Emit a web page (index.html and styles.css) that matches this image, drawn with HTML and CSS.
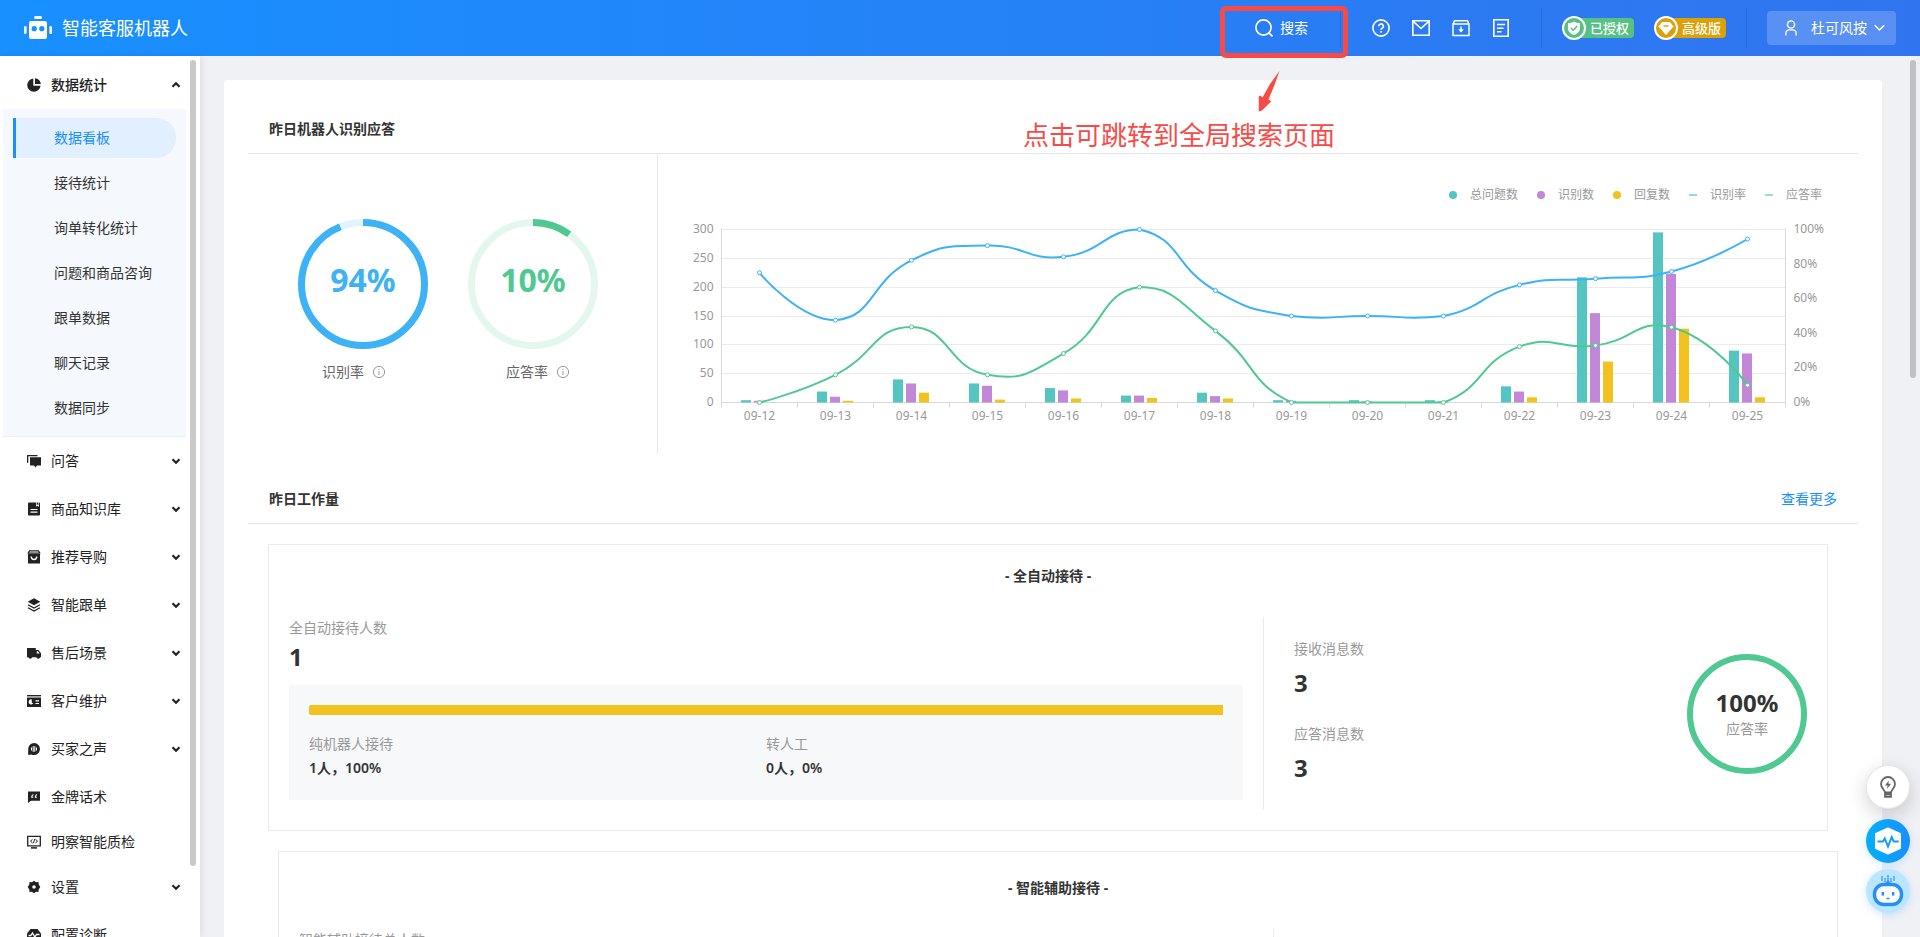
FILE: index.html
```html
<!DOCTYPE html>
<html lang="zh-CN">
<head>
<meta charset="utf-8">
<meta name="viewport" content="width=device-width, initial-scale=1">
<title>智能客服机器人</title>
<link rel="stylesheet" href="styles.css">
</head>
<body>
<svg class="sprite" aria-hidden="true">
  <symbol id="chevron" viewBox="0 0 10 10"><path d="M1.5 3.2 5 6.7l3.5-3.5" fill="none" stroke="currentColor" stroke-width="2.2"/></symbol>
  <symbol id="info" viewBox="0 0 14 14"><circle cx="7" cy="7" r="5.6" fill="none" stroke="currentColor"/><path d="M7 6v4M7 3.8v1.2" stroke="currentColor" fill="none"/></symbol>
</svg>

<header class="topbar">
  <div class="brand">
    <svg class="brand-logo" viewBox="0 0 28 24" fill="#fff"><rect x="10" y="0" width="8" height="3" rx="1.5"/><rect x="0" y="10" width="2.6" height="8" rx="1.3"/><rect x="25.4" y="10" width="2.6" height="8" rx="1.3"/><path fill-rule="evenodd" d="M7 5h14a2 2 0 0 1 2 2v14a2 2 0 0 1-2 2H7a2 2 0 0 1-2-2V7a2 2 0 0 1 2-2zm3.2 5.1a2.6 2.6 0 1 0 0 5.200 2.600 2.600 0 0 0 0-5.200zm7.600 0a2.600 2.600 0 1 0 0 5.200 2.600 2.600 0 0 0 0-5.200z"/></svg>
    <h1 class="brand-name">智能客服机器人</h1>
  </div>
  <div class="tools">
    <button class="search" type="button">
      <svg class="icon-18" viewBox="0 0 18 18" fill="none" stroke="currentColor" stroke-width="1.600"><circle cx="8.500" cy="8.500" r="7.600"/><path d="m13.500 13.500 4 4"/></svg>
      <span>搜索</span>
    </button>
    <span class="divider"></span>
    <div class="icon-row">
      <button class="icon-button" type="button" aria-label="帮助"><svg class="icon-18" viewBox="0 0 18 18" fill="none" stroke="currentColor" stroke-width="1.600"><circle cx="9" cy="9" r="8.100"/><path d="M6.700 7.200a2.300 2.300 0 1 1 3.400 2c-.8.400-1.100.8-1.100 1.600M9 12v1.700"/></svg></button>
      <button class="icon-button" type="button" aria-label="消息"><svg class="icon-18" viewBox="0 0 18 18" fill="none" stroke="currentColor" stroke-width="1.600"><path d="M.8 1.800h16.400v14.400H.8zM1 2.200l8 7.300 8-7.300"/></svg></button>
      <button class="icon-button" type="button" aria-label="下载"><svg class="icon-18" viewBox="0 0 18 18" fill="none" stroke="currentColor" stroke-width="1.500"><path d="M1 5h16v11.500H1zM1.200 5l1.300-3.300h13L16.800 5M9 7.500v5"/><path d="m6.200 10.200 2.800 3.300 2.800-3.300z" fill="currentColor" stroke="none"/></svg></button>
      <button class="icon-button" type="button" aria-label="文档"><svg class="icon-18" viewBox="0 0 18 18" fill="none" stroke="currentColor" stroke-width="1.600"><path d="M1.800.8h14.400v16.400H1.800zM5 5.500h8M5 9.200h6.500M5 12.800h4.500"/></svg></button>
    </div>
    <span class="divider"></span>
    <div class="badges">
      <span class="badge badge-green">
        <svg class="badge-icon" viewBox="0 0 24 24"><circle cx="12" cy="12" r="11" fill="#57c083" stroke="#fff" stroke-width="2"/><path d="M12 5.500c2 1.300 3.700 1.500 6 1.500v5c0 3.600-2.400 5.500-6 7-3.600-1.500-6-3.400-6-7V7c2.300 0 4-.2 6-1.500z" fill="#fff"/><path d="m9 12 2.300 2.200L15.200 10" fill="none" stroke="#57c083" stroke-width="1.500"/></svg>
        <span class="badge-text">已授权</span>
      </span>
      <span class="badge badge-gold">
        <svg class="badge-icon" viewBox="0 0 24 24"><circle cx="12" cy="12" r="11" fill="#dba106" stroke="#fff" stroke-width="2"/><path d="M8 6.500h8l3 4-7 8-7-8z" fill="#fff" stroke="#fff" stroke-linejoin="round"/><path d="M9.500 10h5" stroke="#dba106" stroke-width="1.400"/></svg>
        <span class="badge-text">高级版</span>
      </span>
    </div>
    <span class="divider"></span>
    <button class="user" type="button">
      <svg class="user-icon" viewBox="0 0 12 16" fill="none" stroke="currentColor" stroke-width="1.300"><circle cx="6" cy="4.500" r="3.600"/><path d="M.9 15.500v-2.200a3.500 3.500 0 0 1 3.500-3.500h3.200a3.500 3.500 0 0 1 3.500 3.500v2.200"/></svg>
      <span class="user-name">杜可风按</span>
      <svg class="user-caret" viewBox="0 0 11 8" fill="none" stroke="currentColor" stroke-width="1.500"><path d="m.8 1.200 4.700 4.800 4.700-4.800"/></svg>
    </button>
  </div>
</header>

<div class="shell">
  <nav class="sidebar">
    <button class="group group-open" type="button" aria-expanded="true">
      <svg class="group-icon" viewBox="0 0 14 14"><path d="M6.300.4v7.300h7.300A6.700 6.700 0 1 1 6.300.4z" fill="currentColor"/><path d="M8 .2A6.200 6.200 0 0 1 13.800 6H8z" fill="currentColor"/></svg>
      <span class="group-name">数据统计</span><svg class="chevron chevron-up"><use href="#chevron"/></svg>
    </button>
    <div class="submenu">
      <a class="sub sub-active" href="#board">数据看板</a>
      <a class="sub" href="#reception">接待统计</a>
      <a class="sub" href="#convert">询单转化统计</a>
      <a class="sub" href="#questions">问题和商品咨询</a>
      <a class="sub" href="#follow">跟单数据</a>
      <a class="sub" href="#chat">聊天记录</a>
      <a class="sub" href="#sync">数据同步</a>
    </div>
    <button class="group" type="button"><svg class="group-icon" viewBox="0 0 14 14" fill="currentColor"><path d="M0 1h10.500v1.300H1.300v6.500H0z"/><path d="M3 3.200h11v8.300h-4l-1.500 2-1.500-2H3z"/></svg><span class="group-name">问答</span><svg class="chevron"><use href="#chevron"/></svg></button>
    <button class="group" type="button"><svg class="group-icon" viewBox="0 0 14 14" fill="currentColor"><path fill-rule="evenodd" d="M2 .5h7v4.300l1.500-1 1.500 1V.5h0a1 1 0 0 1 1 1v11a1 1 0 0 1-1 1H2a1 1 0 0 1-1-1v-11a1 1 0 0 1 1-1zM3.500 7v1.100h7V7zm0 2.600v1.100h7V9.600z"/><path d="M9.700.5h1.700v2.600l-.85-.6-.85.6z"/></svg><span class="group-name">商品知识库</span><svg class="chevron"><use href="#chevron"/></svg></button>
    <button class="group" type="button"><svg class="group-icon" viewBox="0 0 14 14" fill="none" stroke="currentColor"><path d="M2.500.9h9L12.700 3H1.300z" stroke-width="1.200"/><path d="M1 3.500h12v10H1z" fill="currentColor" stroke="none"/><path d="M4.200 6.500c.2 4 5.400 4 5.600 0" stroke="#fff" stroke-width="1.400"/></svg><span class="group-name">推荐导购</span><svg class="chevron"><use href="#chevron"/></svg></button>
    <button class="group" type="button"><svg class="group-icon" viewBox="0 0 14 14" fill="none" stroke="currentColor" stroke-width="1.300"><path d="m7 .3 6.300 3.500L7 7.300.7 3.800z" fill="currentColor" stroke="none"/><path d="m1 6.700 6 3.300 6-3.300M1 9.800l6 3.300 6-3.300"/></svg><span class="group-name">智能跟单</span><svg class="chevron"><use href="#chevron"/></svg></button>
    <button class="group" type="button"><svg class="group-icon" viewBox="0 0 14 14" fill="currentColor"><path fill-rule="evenodd" d="M0 2h8.800v2h2.700L14 7.200v4h-1a1.800 1.800 0 0 1-3.500 0H5a1.800 1.800 0 0 1-3.500 0H0zm9.800 3.200v2.400h2.800L11 5.200z"/><circle cx="3.200" cy="11.300" r="1.300"/><circle cx="11.200" cy="11.300" r="1.300"/></svg><span class="group-name">售后场景</span><svg class="chevron"><use href="#chevron"/></svg></button>
    <button class="group" type="button"><svg class="group-icon" viewBox="0 0 14 14" fill="currentColor"><path d="M0 1h14v1.400H0z"/><path fill-rule="evenodd" d="M0 3.400h14V13H0zm4.800 2.100a2.500 2.500 0 1 0 1.500 3.600H4.800zm3.700.8v1.200H12V6.300zm0 2.600v1.200H12V8.900z"/></svg><span class="group-name">客户维护</span><svg class="chevron"><use href="#chevron"/></svg></button>
    <button class="group" type="button"><svg class="group-icon" viewBox="0 0 14 14"><path d="M7 1a6 6 0 1 1-2.700 11.400L1.200 13V7A6 6 0 0 1 7 1z" fill="currentColor"/><path d="M4.500 5.500v3M6.200 4.200v5.600M7.800 4.200v5.600M9.500 5.500v3" stroke="#fff"/></svg><span class="group-name">买家之声</span><svg class="chevron"><use href="#chevron"/></svg></button>
    <a class="group group-leaf" href="#gold"><svg class="group-icon" viewBox="0 0 14 14"><path d="M1 1.500h12v9.300H4L1 13z" fill="currentColor"/><path d="M6.400 4.500c-1.300.4-1.700 1.200-1.700 2.800h1.600M10 4.500c-1.300.4-1.700 1.200-1.700 2.800h1.600" fill="none" stroke="#fff" stroke-width="1.100"/></svg><span class="group-name">金牌话术</span></a>
    <a class="group group-leaf" href="#quality"><svg class="group-icon" viewBox="0 0 14 14" fill="none" stroke="currentColor"><path d="M.7 1.400h12.600v9.400H.7z" stroke-width="1.300"/><path d="M4 12.900h6" stroke-width="1.500"/><path d="m5.500 4.300-2 1.800 2 1.800M8.500 4.300l2 1.800-2 1.800M7.800 4 6.300 8.200"/></svg><span class="group-name">明察智能质检</span></a>
    <button class="group" type="button"><svg class="group-icon" viewBox="0 0 14 14" fill="currentColor"><path fill-rule="evenodd" d="M7 .8 9 2.300l2.500-.2.200 2.500L13.300 7l-1.600 2.400-.2 2.500-2.500-.2-2 1.500-2-1.500-2.500.2-.2-2.500L.7 7l1.600-2.400.2-2.500 2.500.2zM7 5.200a1.800 1.800 0 1 0 0 3.600 1.800 1.800 0 0 0 0-3.600z"/></svg><span class="group-name">设置</span><svg class="chevron"><use href="#chevron"/></svg></button>
    <a class="group" href="#diagnose"><svg class="group-icon" viewBox="0 0 14 14"><path d="M3.500 1h7L14 5.500v4L10.500 14h-7L0 9.500v-4z" fill="currentColor"/><path d="M1.500 7.500h2.300L5.500 5l2.300 4 1.700-2.500h3" fill="none" stroke="#fff" stroke-width="1.300"/></svg><span class="group-name">配置诊断</span></a>
    <span class="thumb thumb-side"></span>
  </nav>

  <main class="main">
    <div class="page">
      <section>
        <div class="section-head"><h2 class="section-title">昨日机器人识别应答</h2></div>
        <div class="overview">
          <div class="gauges">
            <figure class="gauge gauge-blue">
              <div class="ring">
                <svg class="ring-svg" viewBox="0 0 130 130" fill="none" stroke-width="7"><circle cx="65" cy="65" r="61.500" stroke="#e0f3fe"/><circle cx="65" cy="65" r="61.500" stroke="#3db2f5" pathLength="100" stroke-dasharray="94 6" transform="rotate(-90 65 65)"/></svg>
                <strong class="ring-value">94%</strong>
              </div>
              <figcaption class="gauge-label">识别率 <svg class="info"><use href="#info"/></svg></figcaption>
            </figure>
            <figure class="gauge gauge-green">
              <div class="ring">
                <svg class="ring-svg" viewBox="0 0 130 130" fill="none" stroke-width="7"><circle cx="65" cy="65" r="61.500" stroke="#e4f7ee"/><circle cx="65" cy="65" r="61.500" stroke="#4fc891" pathLength="100" stroke-dasharray="10 90" transform="rotate(-90 65 65)"/></svg>
                <strong class="ring-value">10%</strong>
              </div>
              <figcaption class="gauge-label">应答率 <svg class="info"><use href="#info"/></svg></figcaption>
            </figure>
          </div>
          <div class="chart-panel">
            <ul class="legend">
              <li class="legend-item"><i class="dot dot-teal"></i>总问题数</li>
              <li class="legend-item"><i class="dot dot-purple"></i>识别数</li>
              <li class="legend-item"><i class="dot dot-yellow"></i>回复数</li>
              <li class="legend-item"><i class="dash dash-blue"></i>识别率</li>
              <li class="legend-item"><i class="dash dash-green"></i>应答率</li>
            </ul>
            <svg class="chart" id="chart" viewBox="0 0 1200 250" role="img" aria-label="识别应答趋势"></svg>
          </div>
        </div>
      </section>

      <section>
        <div class="section-head section-head-next"><h2 class="section-title">昨日工作量</h2><a class="more" href="#more">查看更多</a></div>
        <article class="card">
          <h3 class="card-title">- 全自动接待 -</h3>
          <div class="card-body">
            <div class="card-left">
              <p class="label">全自动接待人数</p>
              <p class="number number-near">1</p>
              <div class="split">
                <div class="bar"><div class="bar-fill" style="width:100%"></div></div>
                <div class="split-cols">
                  <div><p class="label">纯机器人接待</p><p class="share">1人，100%</p></div>
                  <div><p class="label">转人工</p><p class="share">0人，0%</p></div>
                </div>
              </div>
            </div>
            <div class="card-right">
              <div class="messages">
                <div><p class="label">接收消息数</p><p class="number">3</p></div>
                <div><p class="label">应答消息数</p><p class="number">3</p></div>
              </div>
              <div class="rate">
                <strong class="rate-value">100%</strong>
                <span class="label">应答率</span>
              </div>
            </div>
          </div>
        </article>
        <article class="card card-assist">
          <h3 class="card-title">- 智能辅助接待 -</h3>
          <div class="card-body">
            <div class="card-left"><p class="label">智能辅助接待总人数</p></div>
            <div class="card-right"></div>
          </div>
        </article>
      </section>
    </div>
    <span class="thumb thumb-main"></span>
  </main>
</div>

<aside class="floaters">
  <button class="float float-tip" type="button" aria-label="提示"><svg width="16" height="22" viewBox="0 0 16 22" fill="none" stroke="#666" stroke-width="1.800"><path d="M5 16.500c0-2.500-4-4-4-8.500a7 7 0 0 1 14 0c0 4.500-4 6-4 8.500zM4.700 18.500h6.600M5 16v4.800h6V16"/><path d="M8.800 4.500 5 9.500h2.600L7 13l4-5.200H8.400z" fill="#666" stroke="none"/></svg></button>
  <button class="float float-pulse" type="button" aria-label="诊断"><svg width="28" height="28" viewBox="0 0 28 28"><path d="M14 1.500 26 7v14l-12 5.500L2 21V7z" fill="#fff" stroke="#fff" stroke-width="2" stroke-linejoin="round"/><path d="M3.500 14.500H9l1.800-3 3.200 8 3.700-9.500 2 4.500h5" fill="none" stroke="#169bfc" stroke-width="2"/></svg></button>
  <button class="float float-bot" type="button" aria-label="机器人"><svg width="32" height="32" viewBox="0 0 32 32"><path d="M16 0v8M10 1v5M22 1v5M13 3v4M19 3v4" stroke="#3b9cf8" stroke-width="1.300"/><path d="M12.500 9 16 4.500 19.500 9z" fill="#3b9cf8"/><rect x="2.500" y="9.500" width="27" height="20" rx="9.500" fill="#fff" stroke="#258ef8" stroke-width="3.400"/><path d="M10.800 17v3.500M21.200 17v3.500" stroke="#258ef8" stroke-width="2.400"/><path d="M14.500 23.500h3" stroke="#258ef8" stroke-width="1.500"/></svg></button>
</aside>

<div class="note">
  <div class="note-frame"></div>
  <svg class="note-arrow" viewBox="0 0 22 41"><path d="M21.500 0 16.500 14 10.500 28.500l2.800 1.800L4 39.500.8 40.500V25.500l1.700-1 2 2L12 13z" fill="#f84b47"/></svg>
  <p class="note-text">点击可跳转到全局搜索页面</p>
</div>
<script src="chart.js"></script>
</body>
</html>
```
FILE: styles.css
```css
* { box-sizing: border-box; }
body {
  margin: 0;
  height: 100vh;
  display: flex;
  flex-direction: column;
  position: relative;
  overflow: hidden;
  background: #f0f1f5;
  color: #333;
  font: 14px/22px "Noto Sans", "Noto Sans CJK SC", sans-serif;
}
h1, h2, h3, p, figure, ul { margin: 0; padding: 0; }
ul { list-style: none; }
button { font: inherit; color: inherit; background: none; border: 0; padding: 0; cursor: pointer; }
a { color: inherit; text-decoration: none; }
svg { display: block; flex: none; }
.sprite { position: absolute; width: 0; height: 0; }

/* top bar */
.topbar {
  flex: none;
  height: 56px;
  padding: 0 24px;
  display: flex;
  align-items: center;
  justify-content: space-between;
  color: #fff;
  background: linear-gradient(90deg, #1890ff, #3174ef);
}
.brand { display: flex; align-items: center; gap: 10px; }
.brand-logo { width: 28px; height: 24px; }
.brand-name { font-size: 18px; line-height: 24px; font-weight: 400; }
.tools { display: flex; align-items: center; gap: 20px; }
.search { display: flex; align-items: center; gap: 7px; padding-right: 12px; }
.icon-18 { width: 18px; height: 18px; }
.divider { width: 1px; height: 40px; background: rgba(0, 0, 0, .1); }
.icon-row { display: flex; }
.icon-button { width: 40px; height: 40px; display: flex; align-items: center; justify-content: center; }
.badges { display: flex; gap: 20px; }
.badge { display: flex; align-items: center; height: 24px; width: 72px; }
.badge-icon { width: 24px; height: 24px; z-index: 1; }
.badge-text {
  flex: 1;
  height: 20px;
  margin-left: -12px;
  padding-left: 16px;
  border-radius: 4px;
  font-size: 13px;
  line-height: 20px;
  font-weight: 500;
  white-space: nowrap;
}
.badge-green .badge-text { background: #57c083; }
.badge-gold .badge-text { background: #dba106; }
.user {
  display: flex;
  align-items: center;
  height: 34px;
  padding: 0 11px 0 18px;
  border-radius: 4px;
  background: rgba(255, 255, 255, .2);
}
.user-icon { width: 12px; height: 16px; }
.user-name { margin: 0 7px 0 14px; }
.user-caret { width: 11px; height: 8px; }

/* side menu */
.shell { flex: 1; min-height: 0; display: flex; }
.sidebar {
  position: relative;
  flex: 0 0 200px;
  padding-top: 5px;
  overflow: hidden;
  background: #fff;
  box-shadow: 2px 0 6px rgba(0, 21, 41, .08);
  z-index: 1;
}
.group {
  display: flex;
  align-items: center;
  width: 100%;
  height: 48px;
  padding: 0 19px 0 27px;
  color: #222;
  text-align: left;
}
.group-leaf { height: 45px; padding-top: 3px; }
.group-open { font-weight: 500; }
.group-icon { width: 14px; height: 14px; }
.group-name { flex: 1; margin-left: 10px; }
.chevron { width: 10px; height: 10px; }
.chevron-up { transform: rotate(180deg); }
.submenu {
  margin: 0 14px 0 3px;
  padding: 9px 10px 3px;
  background: #f5f9fd;
  border-bottom: 1px solid #e4f0fb;
}
.sub {
  display: block;
  height: 40px;
  margin-bottom: 5px;
  padding-left: 38px;
  border-left: 3px solid transparent;
  border-radius: 0 20px 20px 0;
  line-height: 40px;
}
.sub-active { color: #1890ff; background: #e1effe; border-left-color: #1890ff; }

/* scroll thumbs */
.thumb { position: absolute; top: 4px; width: 6px; border-radius: 3px; background: #c9c9c9; }
.thumb-side { right: 4px; height: 806px; }
.thumb-main { right: 4px; height: 318px; background: #c1c1c4; }

/* content */
.main { position: relative; flex: 1; min-width: 0; overflow: hidden; padding: 24px 38px 0 24px; }
.page { padding: 0 24px 40px; background: #fff; border-radius: 4px; }
.section-head {
  display: flex;
  justify-content: space-between;
  padding: 38px 21px 13px;
  border-bottom: 1px solid #e6e6e6;
}
.section-head-next { padding-top: 34px; }
.section-title { font-size: 14px; line-height: 22px; font-weight: 700; }
.more { color: #1890ff; }

.overview { display: grid; grid-template-columns: 409px minmax(0, 1fr); }
.gauges { display: flex; gap: 40px; padding: 65px 0 0 50px; }
.ring { position: relative; width: 130px; height: 130px; display: flex; align-items: center; justify-content: center; }
.ring-svg { position: absolute; inset: 0; width: 130px; height: 130px; }
.ring-value { font-size: 32px; line-height: 40px; padding-bottom: 8px; }
.gauge-label { display: flex; align-items: center; gap: 8px; margin-top: 12px; color: #666; }
.gauge-blue .ring-value { color: #3db2f5; }
.gauge-blue .gauge-label { padding-left: 24px; }
.gauge-green .ring-value { color: #4fc891; }
.gauge-green .gauge-label { padding-left: 38px; }
.info { width: 14px; height: 14px; color: #999; }
.chart-panel { border-left: 1px solid #e8e8e8; }
.legend {
  display: flex;
  justify-content: flex-end;
  gap: 19px;
  padding: 32px 36px 0 0;
  color: #999;
  font-size: 12px;
  line-height: 18px;
}
.legend-item { display: flex; align-items: center; gap: 13px; }
.dot { width: 8px; height: 8px; border-radius: 50%; }
.dot-teal { background: #54c5c1; }
.dot-purple { background: #c287d6; }
.dot-yellow { background: #f2c220; }
.dash { width: 8px; height: 2px; }
.dash-blue { background: #93d2f8; }
.dash-green { background: #9bdfbf; }
.chart { width: 100%; height: auto; }
.chart text { fill: #999; font-size: 12px; }

/* workload cards */
.card { margin: 20px 30px 0 20px; padding: 20px 0 20px 20px; border: 1px solid #ebebeb; }
.card-assist { margin: 20px 20px 0 30px; padding-top: 25px; }
.card-title { padding-right: 20px; text-align: center; font-size: 14px; line-height: 22px; font-weight: 700; }
.card-body { display: grid; grid-template-columns: minmax(0, 974fr) minmax(0, 564fr); margin-top: 30px; }
.card-left { padding: 0 20px 10px 0; }
.label { color: #999; line-height: 22px; }
.number { margin-top: 7px; font-size: 24px; line-height: 32px; font-weight: 700; }
.number-near { margin-top: 2px; }
.split { margin-top: 12px; padding: 20px 20px 21px; background: #f7f8fa; }
.bar { height: 10px; }
.bar-fill { height: 100%; border-radius: 2px 0 0 2px; background: #f2c220; }
.split-cols { display: grid; grid-template-columns: 1fr 1fr; margin-top: 18px; }
.share { margin-top: 2px; font-weight: 600; }
.card-right {
  display: flex;
  align-items: center;
  justify-content: space-between;
  padding: 0 20px 0 30px;
  border-left: 1px solid #ebebeb;
}
.messages { align-self: flex-start; display: grid; gap: 24px; padding-top: 21px; }
.rate {
  display: flex;
  flex-direction: column;
  align-items: center;
  justify-content: center;
  width: 120px;
  height: 120px;
  border: 6px solid #4fc891;
  border-radius: 50%;
}
.rate-value { font-size: 24px; line-height: 30px; font-weight: 700; }

/* floating shortcuts */
.floaters { position: absolute; right: 10px; bottom: 24px; display: grid; gap: 6px; z-index: 2; }
.float { width: 44px; height: 44px; border-radius: 50%; display: flex; align-items: center; justify-content: center; }
.float-tip { margin-bottom: 4px; background: #fff; border: 1px solid #e6e6e6; box-shadow: 0 6px 20px rgba(0, 0, 0, .18); }
.float-pulse { background: linear-gradient(90deg, #04b0f8, #1890ff); box-shadow: 0 2px 8px rgba(24, 144, 255, .2); }
.float-bot { background: #bae7ff; box-shadow: 0 2px 8px rgba(24, 144, 255, .2); }

/* annotation over the page */
.note { position: absolute; top: 6px; right: 572px; z-index: 3; color: #f84b47; pointer-events: none; }
.note-frame { width: 128px; height: 52px; border: 5px solid #f84b47; border-radius: 6px; }
.note-arrow { position: absolute; top: 65px; left: 38px; width: 22px; height: 41px; }
.note-text { position: absolute; top: 111px; right: 13px; font-size: 26px; line-height: 36px; white-space: nowrap; }
```
FILE: chart.js
```js
const days = ['09-12', '09-13', '09-14', '09-15', '09-16', '09-17', '09-18', '09-19', '09-20', '09-21', '09-22', '09-23', '09-24', '09-25'];
const bars = [
  { color: '#54c5c1', data: [4, 19, 40, 33, 25, 12, 17, 4, 4, 4, 28, 217, 295, 90] },
  { color: '#c287d6', data: [3, 10, 33, 29, 21, 12, 11, 3, 2, 2, 19, 155, 223, 85] },
  { color: '#f2c220', data: [0, 3, 17, 5, 7, 8, 7, 0, 0, 0, 9, 71, 128, 9] }
];
const lines = [
  { color: '#3db2f5', data: [75, 47.6, 82.2, 90.7, 84.2, 100, 64.7, 50, 50, 50, 68, 71.6, 75.7, 94.5] },
  { color: '#4fc891', data: [0, 16, 43.7, 16, 28.3, 66.7, 41.4, 0, 0, 0, 32.3, 33, 43.5, 10] }
];

const left = 63.5, top0 = 25.5, step = 76, height = 173;
const right = left + step * days.length;
const base = top0 + height;
const out = [];
const line = (x1, y1, x2, y2, c) => out.push(`<line x1="${x1}" y1="${y1}" x2="${x2}" y2="${y2}" stroke="${c}"/>`);
const text = (x, y, anchor, s) => out.push(`<text x="${x}" y="${y}" text-anchor="${anchor}">${s}</text>`);

for (let i = 0; i <= 6; i++) {
  const y = Math.round(base - height * i / 6 - 0.5) + 0.5;
  if (i) line(left, y, right, y, '#ebebeb');
  text(left - 8, y + 3, 'end', i * 50);
}
for (let i = 0; i <= 5; i++) text(right + 8, Math.round(base - height * i / 5 + 3.5), 'start', i * 20 + '%');
line(left, top0 - 1, left, base, '#d9d9d9');
line(right, top0 - 1, right, base, '#d9d9d9');
line(left, base, right, base, '#d9d9d9');

days.forEach((d, i) => {
  const x = left + step * (i + 0.5);
  line(left + step * i, base, left + step * i, base + 5, '#d9d9d9');
  text(x, base + 17, 'middle', d);
  bars.forEach((b, k) => {
    const h = b.data[i] * height / 300;
    out.push(`<rect x="${x - 18.5 + k * 13}" y="${base - h}" width="10" height="${h}" fill="${b.color}"/>`);
  });
});
line(right, base, right, base + 5, '#d9d9d9');

// Smooth curve through the points, with control points kept inside the series' own range.
function smooth(pts) {
  const ys = pts.map(p => p[1]);
  const lo = Math.min(...ys), hi = Math.max(...ys);
  const clamp = y => Math.min(hi, Math.max(lo, y));
  let path = `M${pts[0]}`, c0 = pts[0];
  for (let i = 1; i < pts.length; i++) {
    const p = pts[i], prev = pts[i - 1], next = pts[i + 1];
    let c1 = p, c2 = p;
    if (next) {
      const a = Math.hypot(p[0] - prev[0], p[1] - prev[1]);
      const b = Math.hypot(next[0] - p[0], next[1] - p[1]);
      const r = b / (a + b), vx = next[0] - prev[0], vy = next[1] - prev[1];
      c1 = [p[0] - vx * 0.5 * (1 - r), clamp(p[1] - vy * 0.5 * (1 - r))];
      c2 = [p[0] + vx * 0.5 * r, clamp(p[1] + vy * 0.5 * r)];
    }
    path += `C${c0} ${c1} ${p}`;
    c0 = c2;
  }
  return path;
}

lines.forEach(l => {
  const pts = l.data.map((v, i) => [left + step * (i + 0.5), base - v * height / 100]);
  out.push(`<path d="${smooth(pts)}" fill="none" stroke="${l.color}" stroke-width="2"/>`);
  pts.forEach(p => out.push(`<circle cx="${p[0]}" cy="${p[1]}" r="2" fill="#fff" stroke="${l.color}"/>`));
});

document.getElementById('chart').innerHTML = out.join('');
```
